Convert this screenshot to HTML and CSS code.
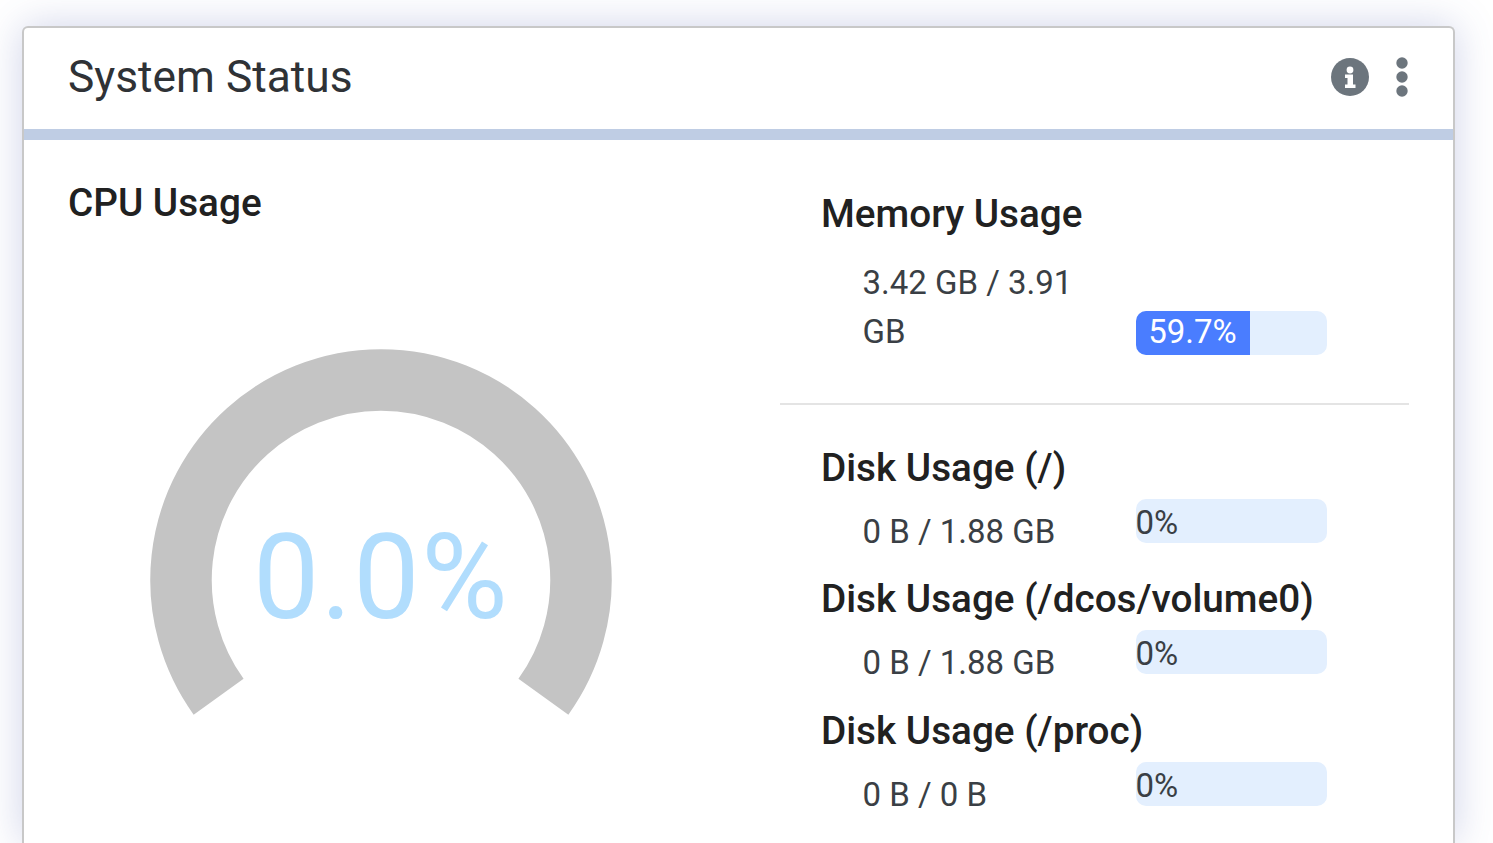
FILE: index.html
```html
<!DOCTYPE html>
<html lang="en">
<head>
    <meta charset="UTF-8">
    <meta name="viewport" content="width=device-width, initial-scale=1.0">
    <title>System Status</title>
    <link rel="stylesheet" href="styles.css">
</head>
<body>
    <div class="card">
        <header class="card-header">
            <h3>System Status</h3>
            <div class="card-actions">
                <svg class="icon-info" width="38" height="38" viewBox="0 0 38 38">
                    <circle cx="19" cy="19" r="19" fill="#6c757d"/>
                    <circle cx="19" cy="12" r="3.4" fill="#fff"/>
                    <path d="M14 16.5h8v10h2.500v3.500h-10.500v-3.500h2.500v-6.500h-2.500z" fill="#fff"/>
                </svg>
                <svg class="icon-menu" width="12" height="40" viewBox="0 0 12 40">
                    <circle cx="6" cy="6" r="5.700" fill="#6c757d"/>
                    <circle cx="6" cy="20" r="5.700" fill="#6c757d"/>
                    <circle cx="6" cy="34" r="5.700" fill="#6c757d"/>
                </svg>
            </div>
        </header>
        <div class="card-body">
            <section class="cpu">
                <h4>CPU Usage</h4>
                <svg class="gauge" width="462" height="370" viewBox="0 0 462 370">
                    <path d="M68.600 347.700 A200 200 0 1 1 393.400 347.700" fill="none" stroke="#c4c4c4" stroke-width="61.500"/>
                    <text x="231" y="269" class="gauge-value" text-anchor="middle">0.0%</text>
                </svg>
            </section>
            <section class="usage">
                <div class="usage-group memory">
                    <h4>Memory Usage</h4>
                    <div class="usage-row">
                        <span class="usage-text">3.42 GB / 3.91 GB</span>
                        <div class="bar"><div class="bar-fill" style="width: 59.7%">59.7%</div></div>
                    </div>
                </div>
                <hr class="divider">
                <div class="disks">
                    <div class="usage-group">
                        <h4>Disk Usage (/)</h4>
                        <div class="usage-row">
                            <span class="usage-text">0 B / 1.88 GB</span>
                            <div class="bar"><div class="bar-label">0%</div></div>
                        </div>
                    </div>
                    <div class="usage-group">
                        <h4>Disk Usage (/dcos/volume0)</h4>
                        <div class="usage-row">
                            <span class="usage-text">0 B / 1.88 GB</span>
                            <div class="bar"><div class="bar-label">0%</div></div>
                        </div>
                    </div>
                    <div class="usage-group">
                        <h4>Disk Usage (/proc)</h4>
                        <div class="usage-row">
                            <span class="usage-text">0 B / 0 B</span>
                            <div class="bar"><div class="bar-label">0%</div></div>
                        </div>
                    </div>
                </div>
            </section>
        </div>
    </div>
</body>
</html>
```

FILE: styles.css
```css
* {
    margin: 0;
    padding: 0;
    box-sizing: border-box;
}

html, body {
    height: 100%;
    overflow: hidden;
}

body {
    background: #fff;
    color: #212121;
    font-family: Roboto, "Liberation Sans", sans-serif;
    padding: 26px 38px 0 22px;
}

.card {
    background: #fff;
    border: 2px solid #c8c8c8;
    border-bottom: none;
    border-radius: 6px 6px 0 0;
    box-shadow: 0 0 40px rgba(70, 85, 170, 0.26);
    height: 100%;
}

.card-header {
    display: flex;
    justify-content: space-between;
    align-items: center;
    height: 112px;
    padding: 0 45px 3px 44px;
    border-bottom: 11px solid #bfcde4;
}

.card-header h3 {
    font-size: 44.3px;
    font-weight: 400;
    color: #2f3236;
}

.card-actions {
    display: flex;
    align-items: center;
    gap: 27.5px;
}

.card-body {
    display: flex;
    padding: 0 44px;
}

h4 {
    font-size: 38.7px;
    font-weight: 500;
    line-height: 45px;
}

.cpu {
    width: 712px;
    padding-top: 40px;
}

.gauge {
    display: block;
    margin: 124px 0 0 82px;
}

.gauge-value {
    font-size: 118px;
    font-weight: 400;
    letter-spacing: 1.5px;
    fill: #b1ddfd;
    font-family: Roboto, sans-serif;
}

.usage {
    flex: 1;
}

.usage-group {
    padding-left: 41px;
}

.memory {
    padding-top: 51px;
    height: 263px;
}

.usage-row {
    display: grid;
    grid-template-columns: 273px 191px;
    padding-left: 41.5px;
}

.memory .usage-row {
    margin-top: 22px;
    align-items: end;
}

.usage-text {
    font-size: 33px;
    line-height: 49px;
    color: #3a3f45;
    padding-right: 60px;
}

.bar {
    height: 44px;
    background: #e3effe;
    border-radius: 10px;
    overflow: hidden;
    font-size: 33px;
    line-height: 42px;
}

.memory .bar {
    margin-bottom: 1px;
}

.bar-fill {
    height: 100%;
    background: #4a7dff;
    color: #fff;
    text-align: center;
}

.bar-label {
    color: #3a3f45;
    line-height: 48px;
}

.divider {
    border: none;
    border-top: 2px solid #e4e4e4;
}

.disks {
    padding-top: 40px;
    display: flex;
    flex-direction: column;
}

.disks .usage-group {
    height: 131.4px;
}

.disks .usage-row {
    margin-top: 9px;
}

.disks .usage-text {
    padding-top: 8px;
}
```
